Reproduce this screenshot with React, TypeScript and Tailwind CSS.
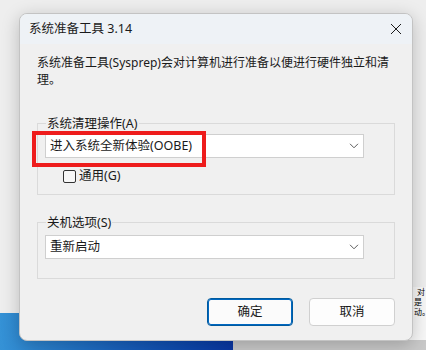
import React from "react";

const ChevronDown = () => (
  <svg viewBox="0 0 10 6" width="10" height="6" fill="none" stroke="#5c5c5c" strokeWidth="1" aria-hidden="true">
    <path d="M1 0.8 5 4.8 9 0.8" />
  </svg>
);

const CloseIcon = () => (
  <svg viewBox="0 0 12 12" width="12" height="12" fill="none" stroke="#1b1b1b" strokeWidth="1" aria-hidden="true">
    <path d="M1 1 11 11M11 1 1 11" />
  </svg>
);

const Combo = ({ value }: { value: string }) => (
  <div className="flex h-[24px] w-[319px] items-center justify-between border border-[#cfcfcf] bg-white pl-[4px] pr-[4px] text-[12.5px] text-[#1a1a1a]">
    <span>{value}</span>
    <ChevronDown />
  </div>
);

const GroupBox = ({
  label,
  className,
  children,
}: {
  label: string;
  className: string;
  children: React.ReactNode;
}) => (
  <div className={`relative w-[358px] border border-[#dadada] ${className}`}>
    <span className="absolute -top-[9px] left-[8px] bg-[#f0f0f0] px-[1px] text-[12.5px] leading-[17px] text-[#1a1a1a]">
      {label}
    </span>
    {children}
  </div>
);

export default function App() {
  return (
    <div className="relative h-[350px] w-[426px] overflow-hidden bg-[#eeeeee] font-['Noto_Sans','Noto_Sans_CJK_SC',sans-serif]">
      {/* desktop behind the dialog */}
      <div className="absolute left-0 top-[313px] h-[37px] w-[233px] bg-gradient-to-r from-[#3592d6] via-[#1a62bd] to-[#0a36a3]" />
      <div className="absolute left-[233px] top-[338px] h-[12px] w-[193px] bg-[#c9c9c9]" />
      <div className="absolute left-[405px] top-[287px] flex h-[53px] w-[21px] flex-col bg-[#f7f7f7] pl-[9px] text-[8px] leading-[10px] text-black">
        <span className="pl-[3px]">对</span>
        <span>是</span>
        <span>动。</span>
      </div>

      {/* dialog */}
      <div className="relative ml-[19px] mt-[13px] flex h-[328px] w-[394px] flex-col overflow-hidden rounded-[8px] border border-[#c3c3c3] bg-[#f0f0f0] shadow-[0_4px_18px_rgba(0,0,0,0.22)]">
        <div className="flex h-[30px] shrink-0 items-center justify-between bg-[#eef2f6] pl-[9px] pr-[10px] text-[12.5px] text-[#1a1a1a]">
          <span>系统准备工具 3.14</span>
          <CloseIcon />
        </div>

        <div className="flex flex-col px-[17px] pt-[10px]">
          <div className="text-[12px] leading-[17px] text-[#1a1a1a]">
            <div className="whitespace-nowrap">系统准备工具(Sysprep)会对计算机进行准备以便进行硬件独立和清</div>
            <div>理。</div>
          </div>

          <GroupBox label="系统清理操作(A)" className="mt-[35px] h-[72px]">
            <div className="ml-[7px] mt-[10px]">
              <Combo value="进入系统全新体验(OOBE)" />
            </div>
            <label className="ml-[25px] mt-[11px] flex items-center gap-[3px] text-[12.5px] leading-[14px] text-[#1a1a1a]">
              <span className="h-[13px] w-[13px] rounded-[2px] border border-[#333333] bg-[#f7f7f7]" />
              <span>通用(G)</span>
            </label>
          </GroupBox>

          <GroupBox label="关机选项(S)" className="mt-[27px] h-[57px]">
            <div className="ml-[7px] mt-[12px]">
              <Combo value="重新启动" />
            </div>
          </GroupBox>

          <div className="mt-[19px] flex justify-end gap-[16px]">
            <button
              type="button"
              className="h-[28px] w-[86px] rounded-[4px] border border-[#005a9e] bg-[#fbfbfb] text-[12.5px] text-[#1a1a1a] shadow-[inset_0_0_0_1px_#0067c0]"
            >
              确定
            </button>
            <button
              type="button"
              className="h-[28px] w-[86px] rounded-[4px] border border-[#d0d0d0] bg-[#fdfdfd] text-[12.5px] text-[#1a1a1a]"
            >
              取消
            </button>
          </div>
        </div>
      </div>

      {/* highlight box */}
      <div className="absolute left-[32px] top-[131px] h-[36px] w-[174px] border-[4px] border-[#ee1c1c]" />
    </div>
  );
}
